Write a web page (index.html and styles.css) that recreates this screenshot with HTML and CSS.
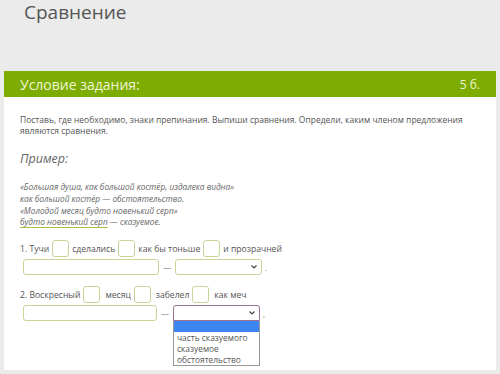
FILE: index.html
```html
<!DOCTYPE html>
<html lang="ru">
<head>
    <meta charset="UTF-8">
    <title>Сравнение</title>
    <link rel="stylesheet" href="styles.css">
</head>
<body>

    <h1 class="page-title">Сравнение</h1>

    <div class="task">
        <div class="task-head">
            <span>Условие задания:</span>
            <span class="points">5 б.</span>
        </div>

        <div class="task-body">
            <p class="task-text">Поставь, где необходимо, знаки препинания. Выпиши сравнения. Определи, каким членом предложения являются сравнения.</p>

            <h2 class="example-title">Пример:</h2>
            <div class="example">
                «Большая душа, как большой костёр, издалека видна»<br>
                как большой костёр — обстоятельство.<br>
                «Молодой месяц будто новенький серп»<br>
                <span class="underline">будто новенький серп</span> — сказуемое.
            </div>

            <div class="item">
                <div class="sentence">
                    <span>1. Тучи</span><span class="mark"></span>
                    <span>сделались</span><span class="mark"></span>
                    <span>как бы тоньше</span><span class="mark"></span>
                    <span>и прозрачней</span>
                </div>
                <div class="answer">
                    <span class="field"></span>
                    <span class="dash">—</span>
                    <span class="select">
                        <svg width="6" height="4" viewBox="0 0 6 4"><path d="M0.5 0.5 L3 3 L5.5 0.5" fill="none" stroke="#444" stroke-width="1.2"/></svg>
                    </span>
                    <span class="end">.</span>
                </div>
            </div>

            <div class="item">
                <div class="sentence">
                    <span>2. Воскресный</span><span class="mark"></span>
                    <span class="wide">месяц</span><span class="mark"></span>
                    <span class="wide">забелел</span><span class="mark"></span>
                    <span class="wide">как меч</span>
                </div>
                <div class="answer second">
                    <span class="field"></span>
                    <span class="dash">—</span>
                    <span class="select-wrap">
                        <span class="select open">
                            <svg width="6" height="4" viewBox="0 0 6 4"><path d="M0.5 0.5 L3 3 L5.5 0.5" fill="none" stroke="#444" stroke-width="1.2"/></svg>
                        </span>
                        <span class="options">
                            <span class="option active"></span>
                            <span class="option">часть сказуемого</span>
                            <span class="option">сказуемое</span>
                            <span class="option">обстоятельство</span>
                        </span>
                    </span>
                    <span class="end">,</span>
                </div>
            </div>
        </div>
    </div>

</body>
</html>
```

FILE: styles.css
```css
body {
    font-family: 'Open Sans', 'Noto Sans', sans-serif;
    margin: 0;
    padding: 0;
    background-color: #ebebeb;
    color: #555;
}

.page-title {
    margin: 0;
    padding: 0 0 0 24px;
    height: 71px;
    font-size: 19px;
    font-weight: 400;
    line-height: 24px;
    color: #555;
}

.task {
    margin-left: 4px;
    width: 492px;
    background-color: #fff;
}

.task-head {
    display: flex;
    justify-content: space-between;
    align-items: center;
    height: 26px;
    padding: 0 16px;
    background-color: #7dac03;
    color: #eef5d2;
    font-size: 14px;
}

.task-head .points {
    font-size: 12px;
}

.task-body {
    padding: 17px 16px 1px 16px;
    height: 255px;
}

.task-text {
    margin: 0;
    font-size: 8.5px;
    line-height: 11px;
    color: #555;
}

.example-title {
    margin: 15px 0 0 0;
    font-size: 12.5px;
    font-style: italic;
    font-weight: 400;
    line-height: 16px;
    color: #666;
}

.example {
    margin-top: 14px;
    font-size: 8.3px;
    font-style: italic;
    line-height: 11.8px;
    color: #666;
}

.underline {
    text-decoration: underline;
    text-decoration-color: #a6c23a;
    text-underline-offset: 2px;
}

.item {
    margin-top: 12px;
}

.item + .item {
    margin-top: 10px;
}

.sentence {
    display: flex;
    align-items: center;
    height: 17px;
    font-size: 8.6px;
    color: #555;
}

.mark {
    width: 15px;
    height: 15px;
    margin: 0 3px 0 3px;
    border: 1px solid #c8d59a;
    border-radius: 3px;
}

.sentence .wide {
    padding-left: 2px;
}

.answer {
    display: flex;
    align-items: flex-start;
    margin-top: 2px;
    padding-left: 3px;
    height: 17px;
}

.field {
    width: 134px;
    height: 14px;
    border: 1px solid #c8d59a;
    border-radius: 3px;
}

.second .field {
    width: 132px;
}

.dash {
    width: 16px;
    text-align: center;
    font-size: 8px;
    line-height: 16px;
    color: #777;
}

.select {
    display: flex;
    justify-content: flex-end;
    align-items: center;
    width: 85px;
    height: 14px;
    border: 1px solid #c8d59a;
    border-radius: 3px;
}

.select svg {
    margin-right: 4px;
}

.select.open {
    border-color: #9c7390;
    border-radius: 3px 3px 0 0;
}

.select-wrap {
    position: relative;
}

.options {
    position: absolute;
    left: 0;
    top: 16px;
    width: 85px;
    display: flex;
    flex-direction: column;
    background-color: #fff;
    border: 1px solid #999;
    border-top: none;
    font-size: 8.4px;
    line-height: 11px;
    color: #555;
}

.option {
    height: 11px;
    padding-left: 3px;
    white-space: nowrap;
}

.option.active {
    background-color: #3d86f2;
}

.end {
    padding-left: 3px;
    font-size: 8px;
    line-height: 18px;
    color: #777;
}
```
